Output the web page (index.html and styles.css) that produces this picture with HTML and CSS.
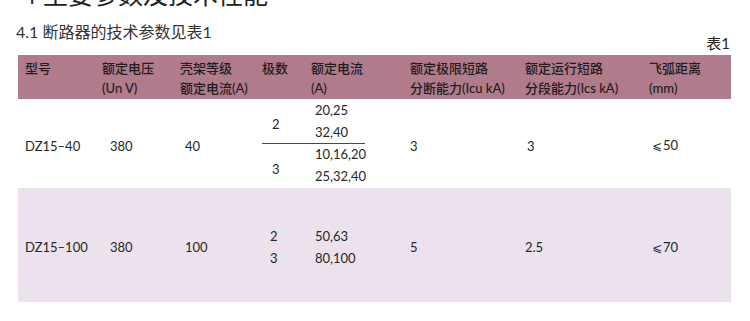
FILE: index.html
```html
<!DOCTYPE html>
<html lang="zh">
<head>
<meta charset="utf-8">
<link rel="stylesheet" href="styles.css">
</head>
<body>
<div class="page">
  <h1 class="title">4 主要参数及技术性能</h1>
  <div class="caption">
    <span class="subtitle">4.1 断路器的技术参数见表1</span>
    <span class="tag">表1</span>
  </div>
  <div class="table">
    <div class="row head">
      <div class="cell">型号</div>
      <div class="cell">额定电压<br>(Un V)</div>
      <div class="cell">壳架等级<br>额定电流(A)</div>
      <div class="cell">极数</div>
      <div class="cell">额定电流<br>(A)</div>
      <div class="cell">额定极限短路<br>分断能力(Icu kA)</div>
      <div class="cell">额定运行短路<br>分段能力(Ics kA)</div>
      <div class="cell">飞弧距离<br>(mm)</div>
    </div>
    <div class="row r1">
      <div class="cell">DZ15–40</div>
      <div class="cell c2">380</div>
      <div class="cell c3">40</div>
      <div class="cell span2">
        <div class="split">
          <div class="sub">
            <div class="pole">2</div>
            <div class="amps">20,25<br>32,40</div>
          </div>
          <div class="sub lower">
            <div class="pole">3</div>
            <div class="amps">10,16,20<br>25,32,40</div>
          </div>
        </div>
      </div>
      <div class="cell">3</div>
      <div class="cell c7">3</div>
      <div class="cell c8"><span class="le">⩽</span>50</div>
    </div>
    <div class="row r2">
      <div class="cell">DZ15–100</div>
      <div class="cell c2">380</div>
      <div class="cell c3">100</div>
      <div class="cell c4">2<br>3</div>
      <div class="cell c5">50,63<br>80,100</div>
      <div class="cell">5</div>
      <div class="cell">2.5</div>
      <div class="cell c8"><span class="le">⩽</span>70</div>
    </div>
  </div>
</div>
</body>
</html>
```

FILE: styles.css
```css
* { box-sizing: border-box; }
html, body { margin: 0; padding: 0; background: #fff; overflow: hidden; }
body {
  font-family: "Lato", "Noto Sans CJK SC", sans-serif;
  color: #262626;
  width: 750px;
  height: 321px;
}
.page {
  padding-left: 18px;
  width: 750px;
}
.title {
  margin: -21px 0 0 4px;
  font-size: 25px;
  line-height: 30px;
  font-weight: 400;
  color: #222;
}
.caption {
  display: flex;
  justify-content: space-between;
  width: 713px;
  height: 27px;
  margin: 13px 0 6px -2px;
}
.subtitle {
  align-self: flex-start;
  font-size: 16px;
  line-height: 20px;
  color: #333;
}
.tag {
  align-self: flex-end;
  font-size: 15px;
  line-height: 18px;
  margin-bottom: -3px;
  margin-right: -1px;
  color: #222;
}
.table {
  width: 713px;
  font-size: 13px;
}
.row {
  display: grid;
  grid-template-columns: 77px 78px 82px 49px 99px 115px 124px 89px;
}
.cell { padding-left: 7px; }
.head {
  background: #b07b8b;
  height: 44px;
  padding-top: 3px;
  line-height: 20px;
  color: #241b20;
  font-weight: 500;
}
.r1 {
  height: 89px;
  align-items: center;
  line-height: 22px;
}
.r1 > .cell { padding-top: 4px; }
.r1 > .span2 {
  grid-column: span 2;
  align-self: stretch;
  padding-top: 0;
}
.c2 { padding-left: 15px; }
.c3 { padding-left: 12px; }
.c7 { padding-left: 9px; }
.c8 { padding-left: 10px; }
.le { font-family: "DejaVu Sans", sans-serif; font-size: 12px; margin-right: 1px; }
.split {
  width: 103px;
  display: flex;
  flex-direction: column;
}
.sub {
  display: grid;
  grid-template-columns: 53px 50px;
  height: 44px;
  align-items: center;
}
.sub.lower {
  border-top: 1px solid #4a4a4a;
  height: 45px;
}
.pole { padding-left: 10px; padding-top: 5px; }
.amps { white-space: nowrap; }
.sub.lower .amps { margin-top: -3px; }
.r2 {
  background: #ece2ee;
  height: 114px;
  align-items: center;
  line-height: 22px;
  padding-top: 4px;
}
.r2 > .c4 { padding-left: 15px; }
.r2 > .c5 { padding-left: 11px; }
```
